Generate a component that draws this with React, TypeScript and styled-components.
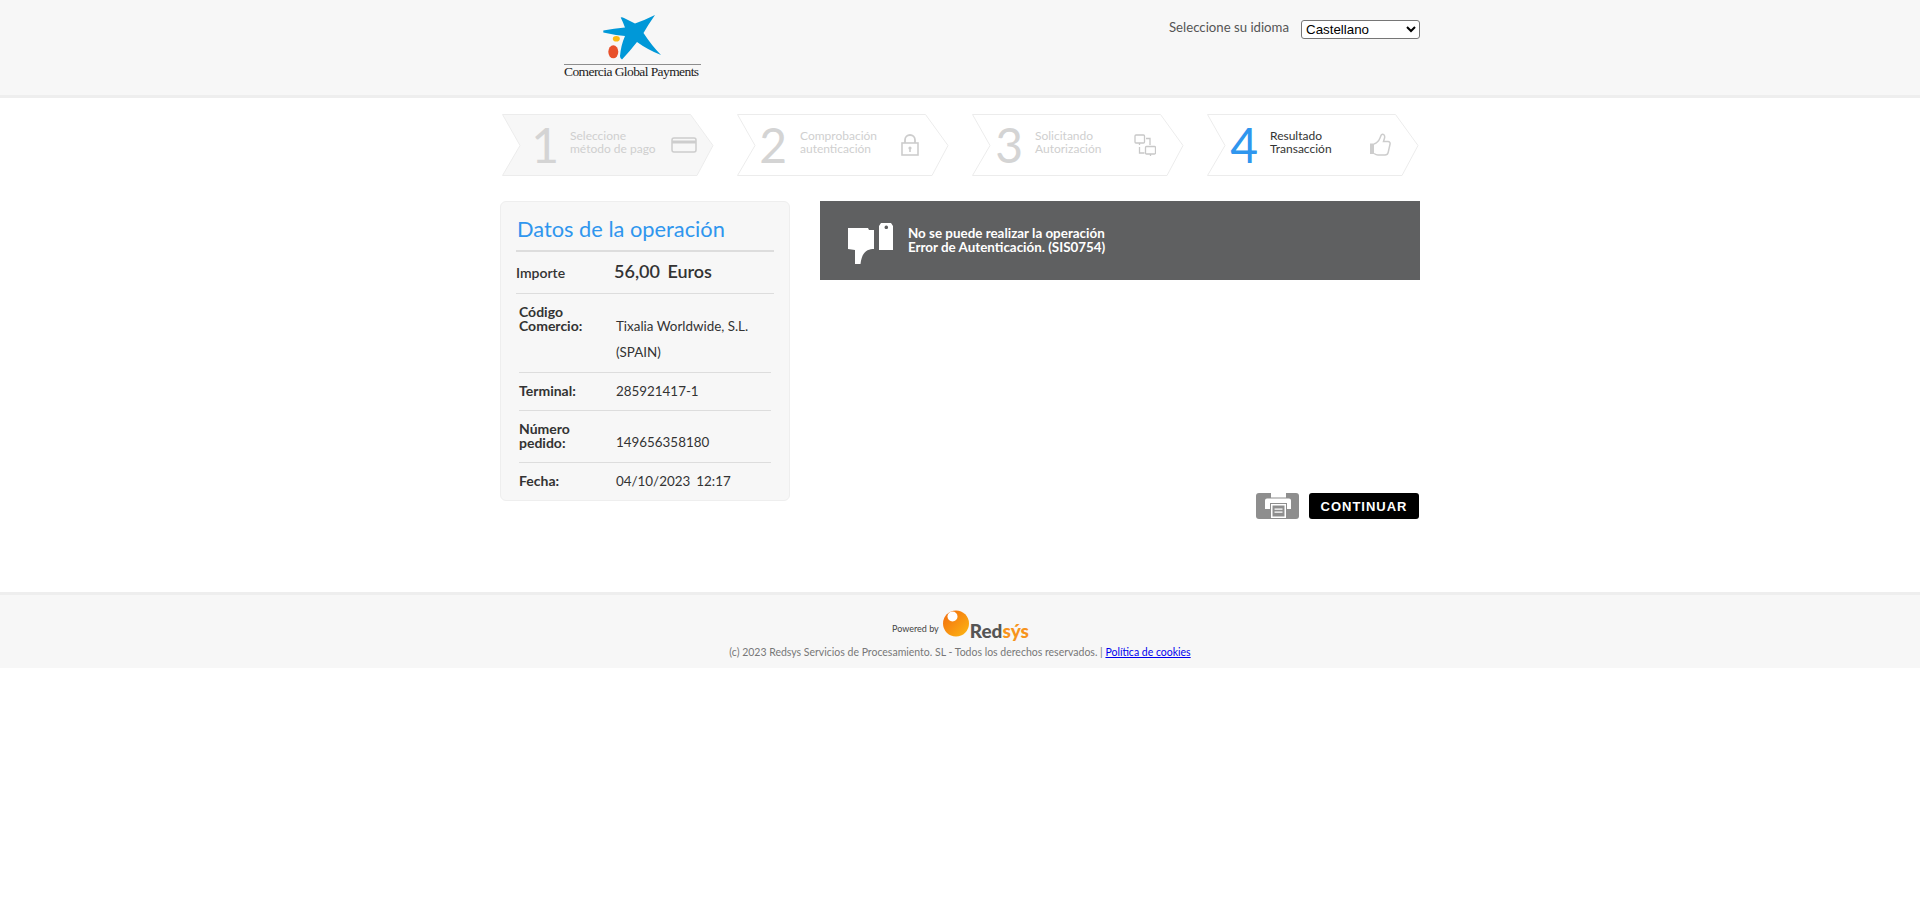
import React from "react";
import styled, { createGlobalStyle } from "styled-components";

const Global = createGlobalStyle`
  html, body { margin: 0; padding: 0; background: #fff; }
  body { font-family: Lato, "Noto Sans", Arial, sans-serif; color: #333; }
  * { box-sizing: border-box; }
`;

const Header = styled.header`
  height: 98px;
  background: #f7f7f7;
  border-bottom: 3px solid #eee;
`;
const Wrap = styled.div`
  width: 920px;
  margin: 0 auto;
`;
const HeaderInner = styled(Wrap)`
  display: flex;
  justify-content: space-between;
  align-items: flex-start;
`;
const Logo = styled.div`
  width: 137px;
  margin-left: 64px;
  padding-top: 13px;
`;
const LogoStar = styled.svg`
  display: block;
  width: 64px;
  height: 48px;
  margin-left: 36px;
`;
const LogoRule = styled.div`
  height: 1px;
  margin-top: 3px;
  background: #8d8d8d;
`;
const LogoText = styled.div`
  font-family: "Liberation Serif", serif;
  font-size: 13.5px;
  line-height: 14px;
  letter-spacing: -0.58px;
  color: #222;
  white-space: nowrap;
`;
const Lang = styled.div`
  display: flex;
  align-items: flex-start;
  padding-top: 20px;
`;
const LangLabel = styled.span`
  font-size: 13.2px;
  line-height: 14px;
  color: #555;
  margin-right: 12px;
`;
const LangSelect = styled.select`
  width: 119px;
  height: 19px;
  font-family: "Liberation Sans", Arial, sans-serif;
  font-size: 13.33px;
  background: #fff;
  color: #000;
  border: 1px solid #767676;
  border-radius: 3px;
  padding: 0;
`;

const Steps = styled.div`
  display: flex;
  gap: 23px;
  padding: 16px 0 0 2px;
`;
const Step = styled.div`
  position: relative;
  width: 212px;
  height: 62px;
  flex: none;
  display: flex;
  align-items: center;
`;
const StepShape = styled.svg`
  position: absolute;
  inset: 0;
  width: 212px;
  height: 62px;
`;
const StepNum = styled.div<{ $active?: boolean; $w: number; $gap: number }>`
  position: relative;
  width: ${(p) => p.$w}px;
  margin-right: ${(p) => p.$gap}px;
  flex: none;
  text-align: right;
  font-family: Lato, sans-serif;
  font-weight: 400;
  font-size: 48px;
  line-height: 62px;
  color: ${(p) => (p.$active ? "#2f96ee" : "#d4d4d4")};
`;
const StepText = styled.div<{ $active?: boolean; $w: number }>`
  position: relative;
  width: ${(p) => p.$w}px;
  flex: none;
  padding-bottom: 7px;
  font-size: 12px;
  line-height: 13px;
  color: ${(p) => (p.$active ? "#333" : "#cfcfcf")};
  white-space: nowrap;
`;
const StepIcon = styled.svg`
  position: relative;
  flex: none;
`;

const Main = styled(Wrap)`
  display: flex;
  align-items: flex-start;
  padding-top: 25px;
  padding-bottom: 73px;
`;
const Card = styled.section`
  width: 290px;
  height: 300px;
  flex: none;
  background: #f7f7f7;
  border: 1px solid #eee;
  border-radius: 6px;
  padding: 0 15px;
`;
const CardTitle = styled.h2`
  margin: 0;
  height: 50px;
  border-bottom: 2px solid #ddd;
  font-size: 21.8px;
  font-weight: 400;
  line-height: 54px;
  color: #2f96ee;
  padding-left: 1px;
`;
const Amount = styled.div`
  display: flex;
  align-items: center;
  height: 42px;
  border-bottom: 1px solid #ddd;
`;
const AmountLabel = styled.span`
  width: 98px;
  font-size: 14px;
  font-weight: 600;
  color: #333;
`;
const AmountValue = styled.span`
  font-size: 18px;
  font-weight: 600;
  color: #333;
  word-spacing: 3px;
  padding-bottom: 3px;
`;
const Rows = styled.div`
  padding: 0 3px;
`;
const Row = styled.div<{ $h: number; $last?: boolean }>`
  display: grid;
  grid-template-columns: 97px 1fr;
  height: ${(p) => p.$h}px;
  border-bottom: ${(p) => (p.$last ? "none" : "1px solid #ddd")};
`;
const RowLabel = styled.div<{ $top?: number }>`
  align-self: ${(p) => (p.$top === undefined ? "center" : "start")};
  padding-top: ${(p) => p.$top ?? 0}px;
  padding-bottom: ${(p) => (p.$top === undefined ? 2 : 0)}px;
  font-size: 14px;
  font-weight: 700;
  line-height: 14px;
  color: #333;
`;
const RowValue = styled.div<{ $top?: number }>`
  align-self: ${(p) => (p.$top === undefined ? "center" : "start")};
  padding-top: ${(p) => p.$top ?? 0}px;
  padding-bottom: ${(p) => (p.$top === undefined ? 2 : 0)}px;
  font-size: 13.4px;
  line-height: 26px;
  color: #333;
`;
const Pair = styled.span`
  margin-right: 6px;
`;

const Right = styled.div`
  width: 600px;
  margin-left: 30px;
  flex: none;
`;
const Message = styled.div`
  display: flex;
  align-items: center;
  height: 79px;
  background: #5f6061;
  padding-left: 28px;
`;
const MessageIcon = styled.svg`
  flex: none;
  margin: 6px 14px 0 0;
`;
const MessageText = styled.div`
  font-size: 13.4px;
  font-weight: 700;
  line-height: 14px;
  padding-bottom: 2px;
  color: #fff;
`;
const Actions = styled.div`
  display: flex;
  justify-content: flex-end;
  align-items: center;
  gap: 10px;
  margin-top: 213px;
  padding-right: 1px;
`;
const PrintButton = styled.button`
  width: 43px;
  height: 26px;
  border: 0;
  border-radius: 3px;
  background: #8e8e8e;
  padding: 0;
  display: flex;
  align-items: center;
  justify-content: center;
`;
const ContinueButton = styled.button`
  width: 110px;
  height: 26px;
  border: 0;
  border-radius: 3px;
  background: #000;
  color: #fff;
  font-family: "Liberation Sans", Arial, sans-serif;
  font-size: 13px;
  font-weight: 700;
  letter-spacing: 1px;
  padding: 0;
`;

const Footer = styled.footer`
  height: 76px;
  background: #f7f7f7;
  border-top: 3px solid #eee;
  padding-top: 15px;
  text-align: center;
`;
const Powered = styled.div`
  display: flex;
  justify-content: center;
  align-items: flex-end;
  height: 31px;
  padding-left: 1px;
`;
const PoweredBy = styled.span`
  font-size: 9px;
  line-height: 11px;
  color: #444;
  margin: 0 4px 7px 0;
`;
const RedsysMark = styled.svg`
  align-self: flex-start;
  flex: none;
`;
const RedsysName = styled.span`
  font-size: 19px;
  line-height: 24px;
  font-weight: 900;
  color: #555;
  margin-left: 1px;
  margin-bottom: -2px;
`;
const RedsysAccent = styled.span`
  color: #f7941d;
`;
const Legal = styled.div`
  font-size: 10.5px;
  line-height: 14px;
  color: #777;
  margin-top: 4px;
`;
const LegalLink = styled.a`
  color: #00e;
  text-decoration: underline;
`;

const stepIcons = {
  card: (
    <StepIcon width="26" height="16" viewBox="0 0 26 16" fill="none" stroke="#cdcdcd">
      <rect x="1" y="1" width="24" height="14" rx="2" strokeWidth="1.5" />
      <rect x="1" y="3.5" width="24" height="3" fill="#cdcdcd" stroke="none" />
    </StepIcon>
  ),
  lock: (
    <StepIcon width="18" height="22" viewBox="0 0 18 22" fill="none" stroke="#cdcdcd">
      <rect x="1" y="9" width="16" height="12" strokeWidth="1.6" />
      <path d="M4 9V6a5 5 0 0 1 10 0v3" strokeWidth="1.8" />
      <circle cx="9" cy="14" r="1.6" fill="#cdcdcd" stroke="none" />
      <rect x="8.2" y="14" width="1.6" height="4" fill="#cdcdcd" stroke="none" />
    </StepIcon>
  ),
  transfer: (
    <StepIcon width="22" height="23" viewBox="0 0 22 23" fill="none" stroke="#c8c8c8" strokeWidth="1.3">
      <rect x="1" y="1" width="9.500" height="8" rx="1" />
      <path d="M5.500 9v2" />
      <rect x="11.500" y="12.500" width="10" height="7.500" rx="1" />
      <path d="M16.500 20v2M12 4.500h4v6.500M5.500 13v6h5" />
    </StepIcon>
  ),
  thumb: (
    <StepIcon width="22" height="24" viewBox="0 0 22 24" fill="none" stroke="#cdcdcd" strokeWidth="1.5">
      <rect x="1" y="10.5" width="4" height="10.5" fill="#cdcdcd" stroke="none" />
      <path d="M5 11c3-1 5-3.5 6-6 .6-1.600 1-3.800 2.600-3.800 2 0 2.400 2.400 1.800 4.300L14.500 8.500h4.500c1.600 0 2.400 1.300 2 2.800l-1.800 8c-.4 1.700-1.500 2.700-3.200 2.700H9c-1.700 0-2.800-.7-4-1.500" />
    </StepIcon>
  ),
};

type StepDef = {
  n: string; a: string; b: string; icon: keyof typeof stepIcons;
  numW: number; textW: number; gap: number; fill: string; active?: boolean;
};
const steps: StepDef[] = [
  { n: "1", a: "Seleccione", b: "método de pago", icon: "card", numW: 57, textW: 101, gap: 11, fill: "#f7f7f7" },
  { n: "2", a: "Comprobación", b: "autenticación", icon: "lock", numW: 50, textW: 101, gap: 13, fill: "#fff" },
  { n: "3", a: "Solicitando", b: "Autorización", icon: "transfer", numW: 51, textW: 99, gap: 12, fill: "#fff" },
  { n: "4", a: "Resultado", b: "Transacción", icon: "thumb", numW: 51, textW: 99, gap: 12, fill: "#fff", active: true },
];

export default function App() {
  return (
    <>
      <Global />
      <Header>
        <HeaderInner>
          <Logo>
            <LogoStar viewBox="50 8 64 48" aria-label="Comercia Global Payments">
              <path
                fill="#0098d8"
                d="M53.300 25.500 Q64 23.500 75 22.500 Q73 17 70.700 12.500 Q72 11.700 74 13 Q80 16 85 18.500 Q95 15 105 10 Q98 20 93.500 28 Q102 41 111 50 Q98 45 87 37 Q80 46 72 54.500 Q70 54 70 51 Q71 40 75 31 Q64 30 53.300 27.500 Z"
              />
              <ellipse cx="66.300" cy="33.700" rx="3.500" ry="2.800" fill="#fdb913" />
              <ellipse cx="63.300" cy="46.800" rx="5" ry="6.500" fill="#e8502a" />
            </LogoStar>
            <LogoRule />
            <LogoText>Comercia Global Payments</LogoText>
          </Logo>
          <Lang>
            <LangLabel>Seleccione su idioma</LangLabel>
            <LangSelect defaultValue="Castellano">
              <option>Castellano</option>
            </LangSelect>
          </Lang>
        </HeaderInner>
      </Header>

      <Wrap>
        <Steps>
          {steps.map((s) => (
            <Step key={s.n}>
              <StepShape viewBox="0 0 212 62">
                <path
                  d="M.5 .5H188.500L211 31.500 195 61.500H.5L18 31.500Z"
                  fill={s.fill}
                  stroke="#ececec"
                />
              </StepShape>
              <StepNum $active={s.active} $w={s.numW} $gap={s.gap}>{s.n}</StepNum>
              <StepText $active={s.active} $w={s.textW}>
                {s.a}
                <br />
                {s.b}
              </StepText>
              {stepIcons[s.icon]}
            </Step>
          ))}
        </Steps>
      </Wrap>

      <Main>
        <Card>
          <CardTitle>Datos de la operación</CardTitle>
          <Amount>
            <AmountLabel>Importe</AmountLabel>
            <AmountValue>56,00 Euros</AmountValue>
          </Amount>
          <Rows>
            <Row $h={79}>
              <RowLabel $top={11}>
                Código
                <br />
                Comercio:
              </RowLabel>
              <RowValue $top={19}>Tixalia Worldwide, S.L. (SPAIN)</RowValue>
            </Row>
            <Row $h={38}>
              <RowLabel>Terminal:</RowLabel>
              <RowValue>285921417-1</RowValue>
            </Row>
            <Row $h={52}>
              <RowLabel $top={11}>
                Número
                <br />
                pedido:
              </RowLabel>
              <RowValue $top={18}>149656358180</RowValue>
            </Row>
            <Row $h={38} $last>
              <RowLabel>Fecha:</RowLabel>
              <RowValue>
                <Pair>04/10/2023</Pair>12:17
              </RowValue>
            </Row>
          </Rows>
        </Card>
        <Right>
          <Message>
            <MessageIcon width="46" height="42" viewBox="0 0 46 42" fill="#fff">
              <path d="M0 5H20L21 7H26V26C20 26 14 28 12.500 41H7V27L0 26Z" />
              <path fillRule="evenodd" d="M31 3L33 0H43L45 3V27H31ZM38.300 2.500a1.800 1.800 0 1 0 .01 0Z" />
            </MessageIcon>
            <MessageText>
              No se puede realizar la operación
              <br />
              Error de Autenticación. (SIS0754)
            </MessageText>
          </Message>
          <Actions>
            <PrintButton aria-label="Imprimir">
              <svg width="26" height="26" viewBox="0 0 26 26" fill="#fff">
                <path d="M6 0H21V4.500H6Z" />
                <path d="M2 5.500H24a2 2 0 0 1 2 2V16H22V10H5V16H0V7.500a2 2 0 0 1 2-2Z" />
                <path fillRule="evenodd" d="M6 11H21V25H6ZM7.500 12.500V23.500H19.500V12.500ZM9.500 15.500H17.500V16.800H9.500ZM9.500 18.500H17.500V19.800H9.500Z" />
              </svg>
            </PrintButton>
            <ContinueButton>CONTINUAR</ContinueButton>
          </Actions>
        </Right>
      </Main>

      <Footer>
        <Powered>
          <PoweredBy>Powered by</PoweredBy>
          <RedsysMark width="26" height="27" viewBox="0 0 26 27">
            <defs>
              <linearGradient id="rg" x1="0" y1="0" x2="1" y2="1">
                <stop offset="0" stopColor="#f26a0f" />
                <stop offset="1" stopColor="#fdb813" />
              </linearGradient>
            </defs>
            <circle cx="13" cy="13.500" r="13" fill="url(#rg)" />
            <circle cx="9.500" cy="6.500" r="5" fill="#fff" />
          </RedsysMark>
          <RedsysName>
            Red<RedsysAccent>sýs</RedsysAccent>
          </RedsysName>
        </Powered>
        <Legal>
          (c) 2023 Redsys Servicios de Procesamiento. SL - Todos los derechos reservados. |{" "}
          <LegalLink href="#">Política de cookies</LegalLink>
        </Legal>
      </Footer>
    </>
  );
}
